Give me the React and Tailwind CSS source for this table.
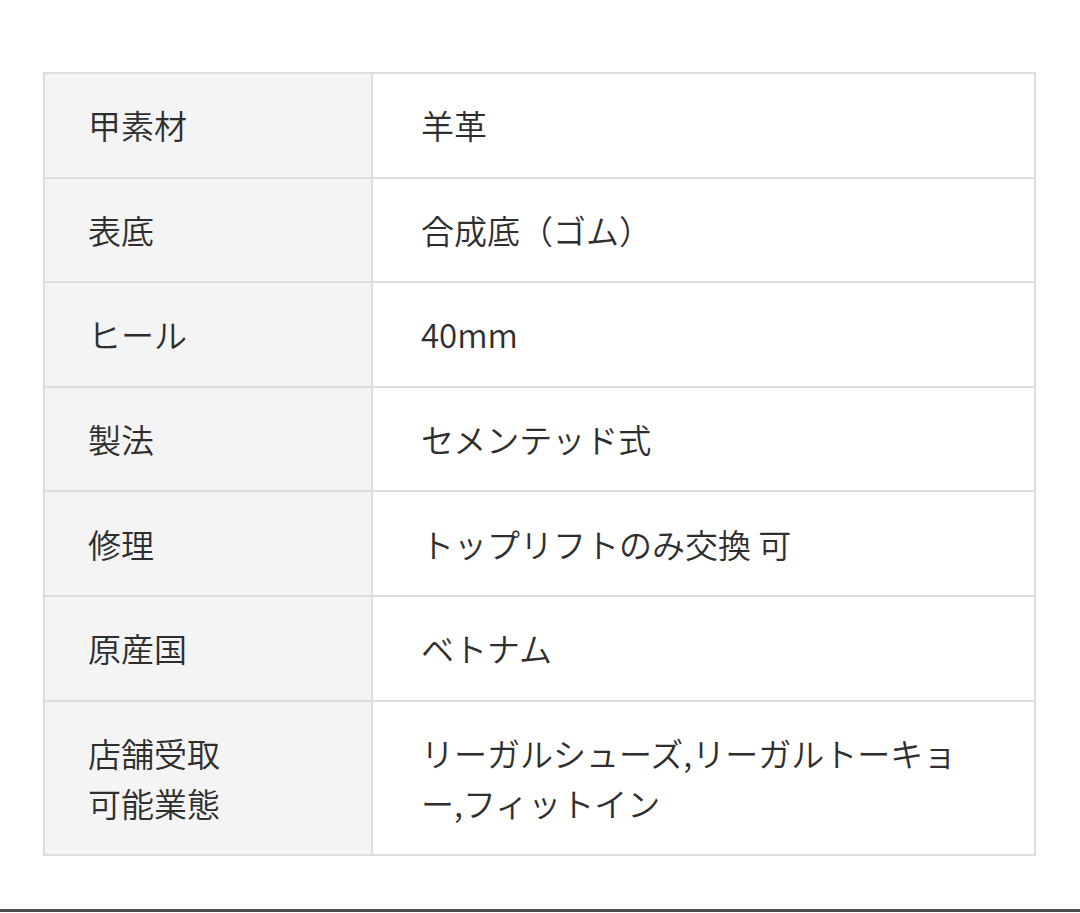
const rows = [
  ['甲素材', '羊革'],
  ['表底', '合成底（ゴム）'],
  ['ヒール', '40mm'],
  ['製法', 'セメンテッド式'],
  ['修理', 'トップリフトのみ交換 可'],
  ['原産国', 'ベトナム'],
  [
    <>店舗受取<br />可能業態</>,
    'リーガルシューズ,リーガルトーキョー,フィットイン',
  ],
];

export default function App() {
  return (
    <div className="w-[1080px] h-[913px] overflow-hidden bg-white font-['Noto_Sans_CJK_JP',sans-serif] font-[350] text-[#2e2e2e]">
      <div className="pt-[72px] pl-[43px]">
        <table className="w-[993px] border-collapse border-2 border-[#dcdcdc] text-[33px] leading-[50px]">
          <tbody>
            {rows.map(([label, value], i) => (
              <tr key={i}>
                <th className="w-[328px] border-2 border-[#dcdcdc] bg-[#f4f4f4] pl-[43px] pr-4 py-[26.3px] text-left align-middle font-[350]">
                  {label}
                </th>
                <td className="border-2 border-[#dcdcdc] bg-white pl-[48px] pr-[50px] py-[26.3px] align-middle">
                  {value}
                </td>
              </tr>
            ))}
          </tbody>
        </table>
      </div>
      <div className="mt-[53px] h-[3px] bg-[#4d4d4d]" />
    </div>
  );
}
